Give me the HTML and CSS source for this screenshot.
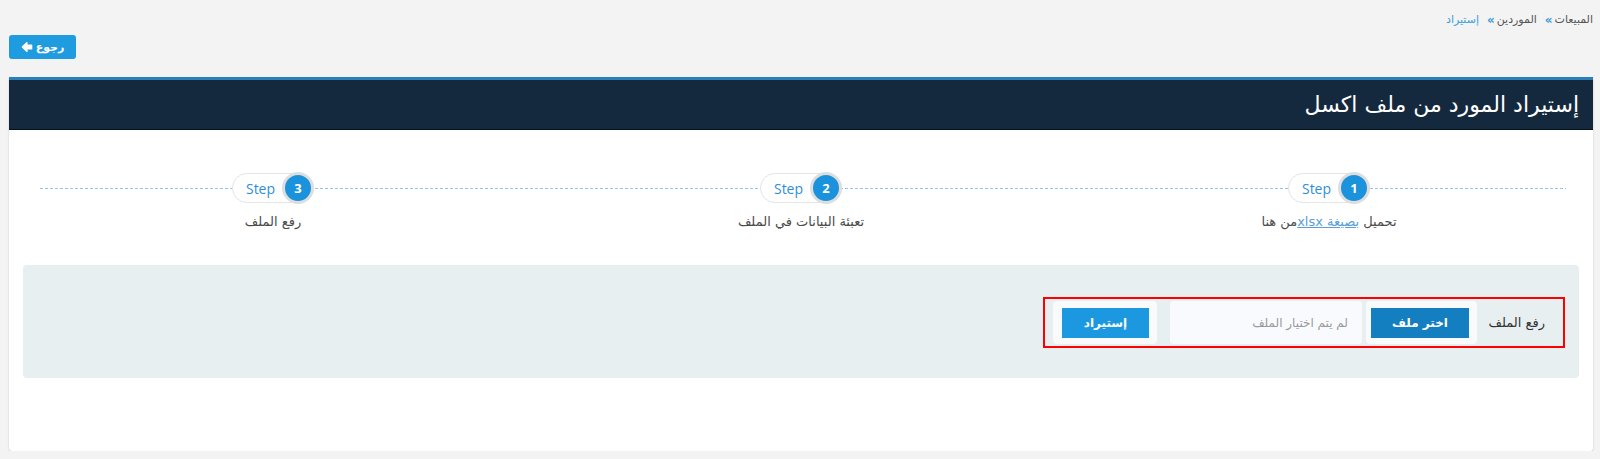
FILE: index.html
```html
<!DOCTYPE html>
<html lang="ar" dir="rtl">
<head>
<meta charset="utf-8">
<title>إستيراد المورد من ملف اكسل</title>
<link rel="stylesheet" href="styles.css">
</head>
<body>
<div class="page">
  <nav class="breadcrumb">
    <span class="crumb">المبيعات</span><span class="sep">»</span>
    <span class="crumb">الموردين</span><span class="sep">»</span>
    <span class="crumb active">إستيراد</span>
  </nav>
  <div class="toolbar">
    <a class="btn-back" href="#">
      <span>رجوع</span>
      <svg class="arrow" viewBox="0 0 14 14" width="12" height="12"><path d="M1.5 7 L7 1.8 L7 4.8 L12.5 4.8 L12.5 9.2 L7 9.2 L7 12.2 Z" fill="#fff" stroke="#fff" stroke-width="1.4" stroke-linejoin="round"/></svg>
    </a>
  </div>
  <section class="card">
    <header class="card-header">
      <h1 class="card-title">إستيراد المورد من ملف اكسل</h1>
    </header>
    <div class="steps">
      <div class="step">
        <div class="pill"><span class="num">1</span><span class="step-text">Step</span></div>
        <div class="step-label">تحميل <a href="#" class="tpl-link">بصيغة xlsx</a>من هنا</div>
      </div>
      <div class="step">
        <div class="pill"><span class="num">2</span><span class="step-text">Step</span></div>
        <div class="step-label">تعبئة البيانات في الملف</div>
      </div>
      <div class="step">
        <div class="pill"><span class="num">3</span><span class="step-text">Step</span></div>
        <div class="step-label">رفع الملف</div>
      </div>
    </div>
    <div class="card-body">
      <div class="panel">
        <div class="upload-row">
          <label class="upload-label">رفع الملف</label>
          <div class="choose-wrap"><button class="btn-choose">اختر ملف</button></div>
          <div class="file-name">لم يتم اختيار الملف</div>
          <div class="import-wrap"><button class="btn-import">إستيراد</button></div>
        </div>
      </div>
    </div>
  </section>
</div>
</body>
</html>
```
FILE: styles.css
```css
* { box-sizing: border-box; }
html, body { margin: 0; padding: 0; }
body {
  background: #f3f3f3;
  direction: rtl;
  font-family: "DejaVu Sans", "Noto Sans", sans-serif;
  color: #444;
}
.page { padding: 0 7px 0 9px; }

.breadcrumb {
  padding-top: 11px;
  font-size: 11px;
  line-height: 18px;
  display: flex;
  align-items: center;
}
.breadcrumb .crumb { color: #555; }
.breadcrumb .sep { color: #3a9ad9; margin: 0 2px 0 8px; font-size: 12px; font-weight: bold; }
.breadcrumb .active { color: #3d9fdc; }

.toolbar {
  display: flex;
  justify-content: flex-end;
  margin-top: 6px;
}
.btn-back {
  display: flex;
  align-items: center;
  justify-content: center;
  gap: 3px;
  width: 67px;
  height: 24px;
  background: #1f9be0;
  color: #fff;
  border-radius: 3px;
  text-decoration: none;
  font-size: 11px;
  font-weight: bold;
}
.btn-back .arrow { display: block; }

.card {
  margin-top: 18px;
  background: #fff;
  box-shadow: 0 1px 2px rgba(0,0,0,0.18);
  border-radius: 0 0 3px 3px;
}
.card-header {
  background: #15293e;
  border-top: 3px solid #2a7fb8;
  border-bottom: 1px solid #08121d;
  height: 53px;
  display: flex;
  align-items: center;
  padding: 0 14px;
}
.card-title {
  margin: 0;
  color: #fff;
  font-weight: normal;
  font-size: 22px;
  line-height: 30px;
}

.steps {
  position: relative;
  display: grid;
  grid-template-columns: repeat(3, 1fr);
  padding-top: 43px;
}
.steps::before {
  content: "";
  position: absolute;
  top: 58px;
  left: 31px;
  right: 27px;
  height: 1px;
  background: repeating-linear-gradient(to right, #96c3ea 0 3px, transparent 3px 5px);
}
.step {
  display: flex;
  flex-direction: column;
  align-items: center;
  position: relative;
}
.pill {
  display: flex;
  align-items: center;
  height: 30px;
  background: #fff;
  border: 1px solid #e4e4e4;
  border-radius: 16px;
  padding-left: 13px;
}
.num {
  width: 32px;
  height: 32px;
  margin: -1px -1px -1px 0;
  border-radius: 50%;
  background: #1a93dc;
  border: 3px solid #dedede;
  color: #fff;
  font-family: "Open Sans", "Noto Sans", sans-serif;
  font-weight: bold;
  font-size: 13px;
  display: flex;
  align-items: center;
  justify-content: center;
}
.step-text {
  margin-right: 7px;
  color: #2f8fd6;
  font-family: "Open Sans", "Noto Sans", sans-serif;
  font-size: 14px;
  font-weight: 500;
}
.step-label {
  margin-top: 9px;
  font-size: 13px;
  line-height: 20px;
  color: #4a4a4a;
}
.tpl-link { color: #5a9fd6; text-decoration: underline; }

.card-body { padding: 33px 14px 73px; }
.panel {
  background: #e8eff1;
  border-radius: 4px;
  padding: 32px 14px 30px;
  display: flex;
  justify-content: flex-start;
}
.upload-row {
  display: flex;
  align-items: center;
  border: 2px solid #ff0000;
  padding: 2px 18px 2px 8px;
}
.upload-label {
  width: 62px;
  margin-left: 6px;
  font-size: 13px;
  font-weight: normal;
  color: #333;
  white-space: nowrap;
}
.choose-wrap, .import-wrap {
  height: 43px;
  background: #f8fafc;
  border-radius: 4px;
  display: flex;
  align-items: center;
}
.choose-wrap { padding: 0 8px 0 5px; }
.import-wrap { padding: 0 8px 0 9px; margin-right: 13px; }
.btn-choose, .btn-import {
  height: 30px;
  border: 0;
  color: #fff;
  font-family: inherit;
  font-weight: bold;
  font-size: 12px;
  cursor: pointer;
}
.btn-choose { width: 98px; background: #137ec0; }
.btn-import { width: 87px; background: #1b98df; }
.file-name {
  width: 192px;
  height: 43px;
  margin-right: 4px;
  background: #f9fafd;
  border-radius: 3px;
  display: flex;
  align-items: center;
  padding-right: 14px;
  font-size: 12px;
  color: #999;
}
```
